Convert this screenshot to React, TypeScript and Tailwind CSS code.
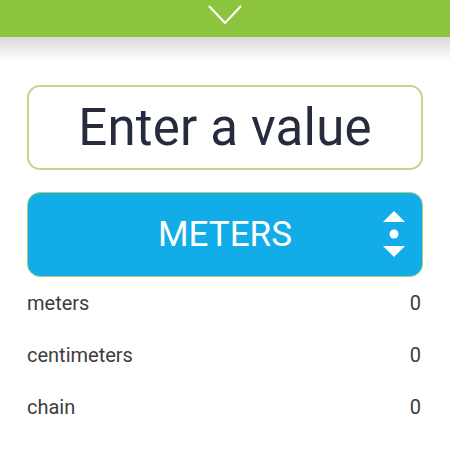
import React from 'react'

const units = [
  { name: 'meters', value: '0' },
  { name: 'centimeters', value: '0' },
  { name: 'chain', value: '0' },
]

function UnitArrows() {
  return (
    <svg width="24" height="48" viewBox="0 0 24 48" className="absolute right-[16px] top-1/2 -translate-y-1/2">
      <path d="M1 11 L12 0 L23 11 Z" fill="white" />
      <circle cx="12" cy="23" r="4.5" fill="white" />
      <path d="M1 35 L12 46 L23 35 Z" fill="white" />
    </svg>
  )
}

export default function App() {
  return (
    <div className="w-[450px] h-[450px] overflow-hidden bg-white" style={{ fontFamily: 'Roboto, "Liberation Sans", sans-serif' }}>
      {/* top bar with collapse chevron */}
      <div className="relative h-[37px] bg-[#8cc43e] flex items-start justify-center">
        <svg width="36" height="22" viewBox="0 0 36 22" className="mt-[4px]">
          <path d="M2 2 L18 19 L34 2" fill="none" stroke="white" strokeWidth="2.2" />
        </svg>
      </div>
      <div className="h-[24px] bg-gradient-to-b from-[#d9d9d9] to-white" />

      <div className="px-[27px] pt-[24px]">
        <div className="h-[85px] rounded-[13px] border-2 border-[#bcd98f] flex items-center justify-center">
          <span className="text-[51px] text-[#262c3e] leading-none tracking-[0.2px]">Enter a value</span>
        </div>

        <div className="relative mt-[22px] h-[85px] rounded-[13px] bg-[#12ade8] border border-[#a9d271] flex items-center justify-center">
          <span className="text-[35px] text-white leading-none">METERS</span>
          <UnitArrows />
        </div>

        <div>
          {units.map((u) => (
            <div key={u.name} className="h-[52px] flex items-center justify-between pr-[2px]">
              <span className="text-[20px] text-[#3d3d3d]">{u.name}</span>
              <span className="text-[20px] text-[#3d3d3d]">{u.value}</span>
            </div>
          ))}
        </div>
      </div>
    </div>
  )
}
